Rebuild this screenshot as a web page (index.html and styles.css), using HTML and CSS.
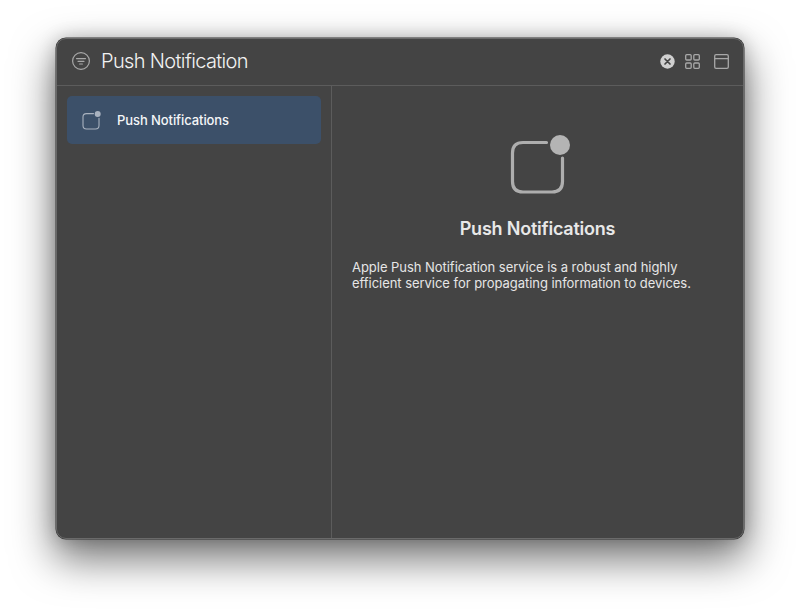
FILE: index.html
```html
<!DOCTYPE html>
<html lang="en">
<head>
<meta charset="utf-8">
<title>Push Notification</title>
<link rel="stylesheet" href="styles.css">
</head>
<body>
<div class="window">
  <header class="toolbar">
    <svg class="filter-icon" width="20" height="20" viewBox="0 0 20 20" fill="none" stroke="#a8a8a8">
      <circle cx="10" cy="10" r="8.4" stroke-width="1.2"/>
      <path d="M5.500 7.600h9M7 10.300h6M8.600 13h2.800" stroke-width="1.200" stroke-linecap="round"/>
    </svg>
    <h1 class="title">Push Notification</h1>
    <div class="tools">
      <svg class="close-icon" width="15" height="15" viewBox="0 0 15 15">
        <circle cx="7.500" cy="7.500" r="7.200" fill="#d0d0d0"/>
        <path d="M5 5l5 5M10 5l-5 5" stroke="#444" stroke-width="1.700" stroke-linecap="round"/>
      </svg>
      <svg class="grid-icon" width="15" height="15" viewBox="0 0 15 15" fill="none" stroke="#a8a8a8" stroke-width="1.300">
        <rect x="0.700" y="0.700" width="5.500" height="5.300" rx="1"/>
        <rect x="8.800" y="0.700" width="5.500" height="5.300" rx="1"/>
        <rect x="0.700" y="9" width="5.500" height="5.300" rx="1"/>
        <rect x="8.800" y="9" width="5.500" height="5.300" rx="1"/>
      </svg>
      <svg class="panel-icon" width="15" height="15" viewBox="0 0 15 15" fill="none" stroke="#a8a8a8" stroke-width="1.300">
        <rect x="0.700" y="0.700" width="13.600" height="13.600" rx="1.400"/>
        <path d="M0.700 4.600h13.600"/>
      </svg>
    </div>
  </header>
  <div class="content">
    <aside class="sidebar">
      <div class="item">
        <svg class="item-icon" width="20" height="20" viewBox="0 0 20 20" fill="none">
          <path d="M11.500 3.600H4.500C2 3.600 1 4.600 1 7V15.500C1 18 2 19 4.500 19H13.500C16 19 17 18 17 15.500V8.300" stroke="#a9b2bf" stroke-width="1.100" stroke-linecap="round"/>
          <circle cx="15.700" cy="4" r="3" fill="#a9b2bf"/>
        </svg>
        <span class="item-label">Push Notifications</span>
      </div>
    </aside>
    <main class="detail">
      <svg class="hero-icon" width="65" height="60" viewBox="-5 0 65 60" fill="none">
        <path d="M36.500 7.500H13C6 7.500 2.500 11 2.500 18V46.500C2.500 53.500 6 57 13 57H42C49 57 52.500 53.500 52.500 46.500V23" stroke="#aeaeae" stroke-width="3.200" stroke-linecap="round"/>
        <circle cx="50" cy="10" r="10" fill="#b4b4b4"/>
      </svg>
      <h2 class="heading">Push Notifications</h2>
      <p class="description">Apple Push Notification service is a robust and highly efficient service for propagating information to devices.</p>
    </main>
  </div>
</div>
</body>
</html>
```

FILE: styles.css
```css
* {
  box-sizing: border-box;
}

html,
body {
  margin: 0;
  height: 100%;
}

body {
  background: #ffffff;
  padding: 38px 56px 74px;
  overflow: hidden;
  font-family: Inter, "Liberation Sans", sans-serif;
}

.window {
  height: 501px;
  display: flex;
  flex-direction: column;
  background: #444444;
  border: 1px solid #6a6a6a;
  border-radius: 10px;
  box-shadow: 0 0 0 0.5px #333333, 0 18px 42px 2px rgba(0, 0, 0, 0.55), 0 0 18px rgba(0, 0, 0, 0.2);
}

.toolbar {
  height: 47px;
  flex: none;
  display: flex;
  align-items: center;
  padding: 0 14px 2px 14px;
  border-bottom: 1px solid #5c5c5c;
}

.title {
  margin: 0 0 0 10px;
  font-size: 20px;
  font-weight: 300;
  letter-spacing: -0.650px;
  color: #f2f2f2;
}

.tools {
  margin-left: auto;
  display: flex;
  align-items: center;
  gap: 14px;
}

.close-icon {
  margin-right: -4px;
}

.content {
  flex: 1;
  display: flex;
  min-height: 0;
}

.sidebar {
  width: 275px;
  flex: none;
  padding: 10px 10px 0;
  border-right: 1px solid #5c5c5c;
}

.item {
  height: 48px;
  display: flex;
  align-items: center;
  padding-left: 15px;
  gap: 15px;
  background: #3c5069;
  border-radius: 5px;
}

.item-label {
  font-size: 13px;
  font-weight: 450;
  letter-spacing: -0.080px;
  color: #f4f6f8;
}

.detail {
  flex: 1;
  padding: 49px 20px 0;
  display: flex;
  flex-direction: column;
  align-items: center;
}

.heading {
  margin: 22px 0 0;
  font-size: 18px;
  line-height: 24px;
  font-weight: 600;
  letter-spacing: -0.220px;
  color: #e8e8e8;
}

.description {
  margin: 18px 0 0;
  align-self: stretch;
  font-size: 13px;
  line-height: 16px;
  letter-spacing: -0.040px;
  color: #e6e6e6;
}
```
